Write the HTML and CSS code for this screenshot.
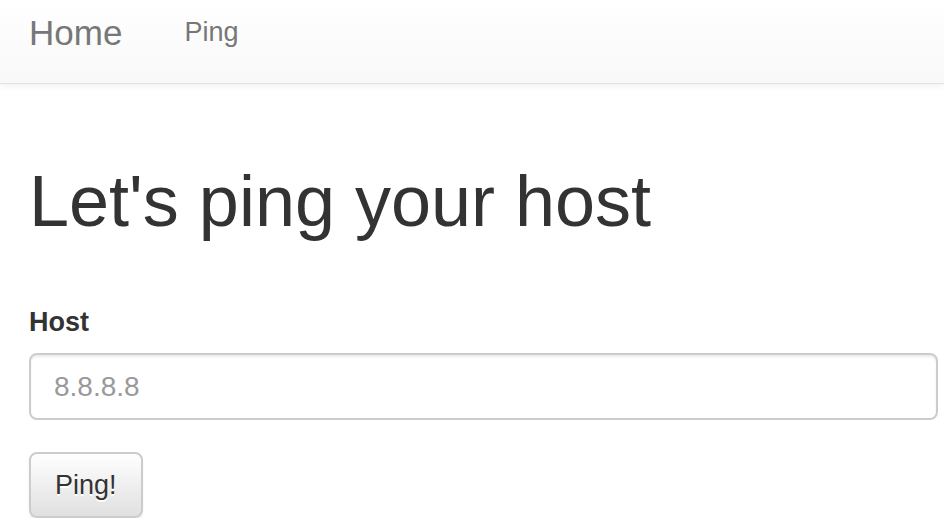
FILE: index.html
```html
<!DOCTYPE html>
<html lang="en">
<head>
    <meta charset="UTF-8">
    <meta name="viewport" content="width=device-width, initial-scale=1.0">
    <title>Ping</title>
    <link rel="stylesheet" href="styles.css">
</head>
<body>
    <nav class="navbar">
        <a class="navbar-brand" href="#">Home</a>
        <a class="nav-link" href="#">Ping</a>
    </nav>
    <div class="container">
        <h1>Let's ping your host</h1>
        <form class="ping-form" onsubmit="return false;">
            <label for="host">Host</label>
            <input type="text" id="host" class="form-control" placeholder="8.8.8.8">
            <button type="submit" class="btn">Ping!</button>
        </form>
    </div>
</body>
</html>
```

FILE: styles.css
```css
body {
    margin: 0;
    font-family: "Liberation Sans", Arial, Helvetica, sans-serif;
    color: #333;
    background: #fff;
}
a {
    text-decoration: none;
}
.navbar {
    height: 83px;
    padding-left: 29px;
    display: flex;
    align-items: flex-start;
    background: linear-gradient(to bottom, #fff 0%, #f8f8f8 100%);
    border-bottom: 1px solid #e2e2e2;
    box-shadow: 0 1px 8px rgba(0, 0, 0, 0.075);
}
.navbar-brand {
    margin-top: 15px;
    font-size: 35px;
    line-height: 35px;
    color: #777;
}
.nav-link {
    margin: 19px 0 0 62px;
    font-size: 27px;
    line-height: 27px;
    color: #777;
}
.container {
    padding: 0 6px 0 29px;
}
h1 {
    font-size: 72px;
    font-weight: 500;
    line-height: 79px;
    margin: 78px 0 0;
}
label {
    display: block;
    font-size: 27px;
    font-weight: bold;
    line-height: 37px;
    margin: 63px 0 12px;
}
.form-control {
    display: block;
    box-sizing: border-box;
    width: 100%;
    height: 67px;
    padding: 0 23px;
    font-family: inherit;
    font-size: 28px;
    color: #555;
    border: 2px solid #ccc;
    border-radius: 8px;
    box-shadow: inset 0 2px 2px rgba(0, 0, 0, 0.075);
    outline: none;
}
.form-control::placeholder {
    color: #999;
}
.btn {
    margin-top: 32px;
    height: 66px;
    padding: 0 24px;
    font-family: inherit;
    font-size: 27px;
    color: #333;
    text-shadow: 0 2px 0 #fff;
    background: linear-gradient(to bottom, #fff 0%, #e0e0e0 100%);
    border: 2px solid #ccc;
    border-radius: 8px;
    box-shadow: inset 0 2px 0 rgba(255, 255, 255, 0.15), 0 2px 2px rgba(0, 0, 0, 0.075);
    cursor: pointer;
}
```
